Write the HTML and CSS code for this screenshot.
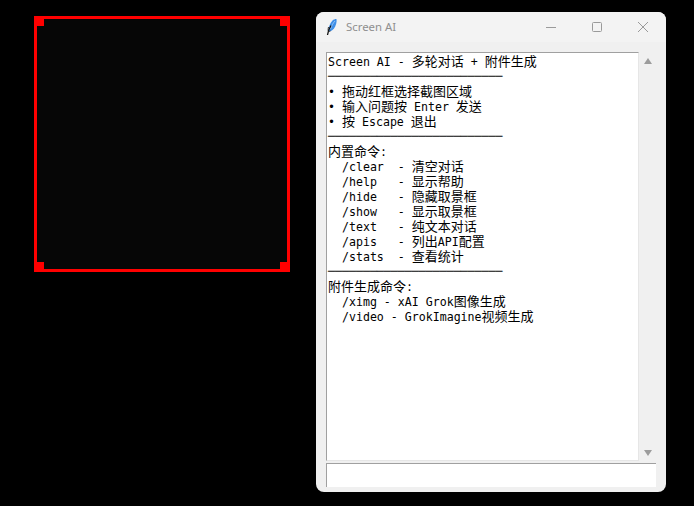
FILE: index.html
```html
<!DOCTYPE html>
<html lang="en">
<head>
    <meta charset="UTF-8">
    <meta name="viewport" content="width=device-width, initial-scale=1.0">
    <title>Screen AI</title>
    <link rel="stylesheet" href="styles.css">
</head>
<body>
    <!-- capture frame -->
    <div class="frame">
        <span class="corner tl"></span>
        <span class="corner tr"></span>
        <span class="corner bl"></span>
        <span class="corner br"></span>
    </div>

    <!-- app window -->
    <div class="window">
        <div class="titlebar">
            <svg class="feather" width="12" height="18" viewBox="0 0 12 18">
                <path d="M2.5 13 C2.5 9 4 5 6.5 2.5 C7.5 1.5 9 1 10.5 1 C11 4 10 7.5 8 10.5 C6.5 12.5 4.5 13.5 2.5 13 Z" fill="#3f8fe8"/>
                <path d="M4.5 11 C5.5 8 7 5 9 3" fill="none" stroke="#a8d0f5" stroke-width="0.8"/>
                <path d="M1.5 17 C2 14 3 10.5 5 7.5" fill="none" stroke="#101010" stroke-width="1.3"/>
                <path d="M2.5 9 C2 11 2 12.5 2.5 13.5 L4.5 13" fill="none" stroke="#202020" stroke-width="0.9"/>
            </svg>
            <span class="title">Screen AI</span>
            <div class="controls">
                <svg width="12" height="12" viewBox="0 0 12 12"><path d="M1 6.5 H11" stroke="#9a9a9a" fill="none"/></svg>
                <svg width="12" height="12" viewBox="0 0 12 12"><rect x="1.5" y="1.5" width="9" height="9" rx="1" stroke="#9a9a9a" fill="none"/></svg>
                <svg width="12" height="12" viewBox="0 0 12 12"><path d="M1 1 L11 11 M11 1 L1 11" stroke="#9a9a9a" fill="none"/></svg>
            </div>
        </div>
        <div class="content">
            <div class="log-row">
                <div class="log">
                    <div class="line">Screen AI - <span class="zh">多轮对话</span> + <span class="zh">附件生成</span></div>
                    <div class="line rule">─────────────────────────</div>
                    <div class="line">• <span class="zh">拖动红框选择截图区域</span></div>
                    <div class="line">• <span class="zh">输入问题按</span> Enter <span class="zh">发送</span></div>
                    <div class="line">• <span class="zh">按</span> Escape <span class="zh">退出</span></div>
                    <div class="line rule">─────────────────────────</div>
                    <div class="line"><span class="zh">内置命令</span>:</div>
                    <div class="line">  /clear  - <span class="zh">清空对话</span></div>
                    <div class="line">  /help   - <span class="zh">显示帮助</span></div>
                    <div class="line">  /hide   - <span class="zh">隐藏取景框</span></div>
                    <div class="line">  /show   - <span class="zh">显示取景框</span></div>
                    <div class="line">  /text   - <span class="zh">纯文本对话</span></div>
                    <div class="line">  /apis   - <span class="zh">列出</span>API<span class="zh">配置</span></div>
                    <div class="line">  /stats  - <span class="zh">查看统计</span></div>
                    <div class="line rule">─────────────────────────</div>
                    <div class="line"><span class="zh">附件生成命令</span>:</div>
                    <div class="line">  /ximg - xAI Grok<span class="zh">图像生成</span></div>
                    <div class="line">  /video - GrokImagine<span class="zh">视频生成</span></div>
                </div>
                <div class="scrollbar">
                    <span class="arrow up"></span>
                    <span class="arrow down"></span>
                </div>
            </div>
            <div class="entry"></div>
        </div>
    </div>
</body>
</html>
```

FILE: styles.css
```css
html, body {
    margin: 0;
    height: 100%;
    background-color: #000;
    overflow: hidden;
}

.frame {
    position: absolute;
    left: 34px;
    top: 16px;
    width: 250px;
    height: 250px;
    border: 3px solid #f00;
    background-color: #060606;
}
.corner {
    position: absolute;
    width: 10px;
    height: 10px;
    background-color: #f00;
}
.tl { left: -3px; top: -3px; }
.tr { right: -3px; top: -3px; }
.bl { left: -3px; bottom: -3px; }
.br { right: -3px; bottom: -3px; }

.window {
    position: absolute;
    left: 316px;
    top: 12px;
    width: 350px;
    height: 480px;
    display: flex;
    flex-direction: column;
    background-color: #f0f0f0;
    border-radius: 8px;
    overflow: hidden;
}
.titlebar {
    height: 30px;
    flex: none;
    display: flex;
    align-items: center;
    padding-left: 10px;
    background-color: #f3f3f3;
}
.feather {
    flex: none;
}
.title {
    margin-left: 8px;
    margin-bottom: 1px;
    font-family: "Noto Sans", sans-serif;
    font-size: 11.4px;
    color: #8f8f8f;
}
.controls {
    margin-left: auto;
    display: flex;
    gap: 34px;
    padding-right: 17px;
}

.content {
    flex: 1;
    min-height: 0;
    display: flex;
    flex-direction: column;
    padding: 10px 10px 5px;
    gap: 2px;
}
.log-row {
    flex: 1;
    display: flex;
    min-height: 0;
}
.log {
    flex: 1;
    box-sizing: border-box;
    padding: 1px 1px 0;
    background-color: #fff;
    border: 1px solid #e6e6e6;
    border-top-color: #a0a0a0;
    border-left-color: #a0a0a0;
    font-family: "DejaVu Sans Mono", monospace;
    font-size: 11.6px;
    color: #000;
}
.line {
    height: 15px;
    line-height: 13px;
    white-space: pre;
}
.rule {
    box-sizing: border-box;
    padding-top: 1px;
}
.zh {
    font-family: "Noto Sans CJK SC", sans-serif;
    font-size: 13px;
    line-height: 13px;
}
.scrollbar {
    flex: none;
    width: 17px;
    display: flex;
    flex-direction: column;
    justify-content: space-between;
    align-items: center;
    padding: 6px 0 5px;
}
.arrow {
    width: 0;
    height: 0;
    border-left: 4.5px solid transparent;
    border-right: 4.5px solid transparent;
}
.up { border-bottom: 6px solid #9c9c9c; }
.down { border-top: 6px solid #9c9c9c; }

.entry {
    height: 23px;
    flex: none;
    background-color: #fff;
    border-top: 1px solid #a0a0a0;
    border-left: 1px solid #a0a0a0;
}
```
